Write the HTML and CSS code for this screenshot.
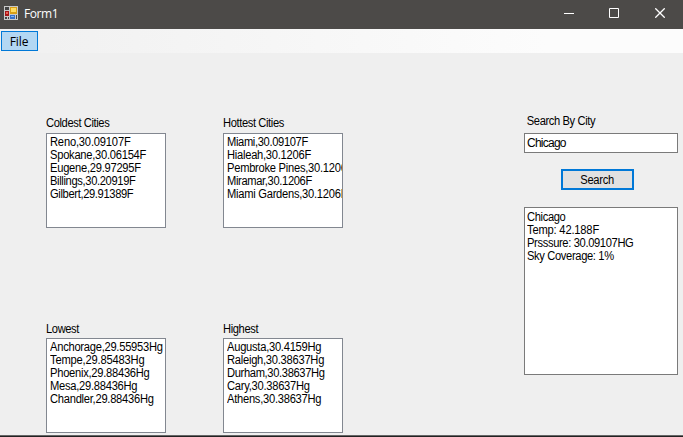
FILE: index.html
```html
<!DOCTYPE html>
<html lang="en">
<head>
<meta charset="utf-8">
<title>Form1</title>
<link rel="stylesheet" href="styles.css">
</head>
<body>
<div class="window">
  <header class="titlebar">
    <svg class="app-icon" width="14" height="14" viewBox="0 0 14 14" shape-rendering="crispEdges">
      <path fill="#c9c9c9" d="M0 0h14v14H0z"/>
      <path fill="#444" d="M1 1h4v3H1zM1 11h2v2H1zM4 11h1v2H4zM12 9h1v4h-1z"/>
      <path fill="#a51616" d="M1 5h4v5H1z"/><path fill="#ee6256" d="M2 6h2v2H2z"/>
      <path fill="#d99f16" d="M6 1h7v7H6z"/><path fill="#ffdc60" d="M7 2h5v4H7z"/>
      <path fill="#3970c8" d="M6 9h5v4H6z"/><path fill="#80b5f6" d="M7 10h3v1H7z"/>
    </svg>
    <h1 class="title">Form1</h1>
    <div class="controls">
      <svg width="10" height="10" viewBox="0 0 10 10"><path d="M0 5.5h10"/></svg>
      <svg width="10" height="10" viewBox="0 0 10 10"><path d="M.5.5h9v9h-9z"/></svg>
      <svg class="close" width="10" height="10" viewBox="0 0 10 10"><path d="M.3.3l9.4 9.4M9.7.3L.3 9.7"/></svg>
    </div>
  </header>
  <nav class="menubar"><button class="menu-item">File</button></nav>
  <main class="form">
    <div class="lists">
      <section>
        <h2 class="label">Coldest Cities</h2>
        <ul class="listbox"><li class="loose">Reno,30.09107F</li><li>Spokane,30.06154F</li><li>Eugene,29.97295F</li><li class="tight">Billings,30.20919F</li><li class="tight">Gilbert,29.91389F</li></ul>
      </section>
      <section>
        <h2 class="label">Hottest Cities</h2>
        <ul class="listbox"><li class="tight">Miami,30.09107F</li><li>Hialeah,30.1206F</li><li>Pembroke Pines,30.1206F</li><li class="tight">Miramar,30.1206F</li><li>Miami Gardens,30.1206F</li></ul>
      </section>
      <section>
        <h2 class="label label-short">Lowest</h2>
        <ul class="listbox"><li>Anchorage,29.55953Hg</li><li class="loose">Tempe,29.85483Hg</li><li>Phoenix,29.88436Hg</li><li>Mesa,29.88436Hg</li><li>Chandler,29.88436Hg</li></ul>
      </section>
      <section>
        <h2 class="label label-short">Highest</h2>
        <ul class="listbox"><li>Augusta,30.4159Hg</li><li>Raleigh,30.38637Hg</li><li class="tight">Durham,30.38637Hg</li><li>Cary,30.38637Hg</li><li>Athens,30.38637Hg</li></ul>
      </section>
    </div>
    <section class="search">
      <label class="label search-label" for="city">Search By City</label>
      <input class="field" id="city" value="Chicago">
      <button class="search-button"><span class="caption">Search</span></button>
      <div class="output"><p class="tight">Chicago</p><p class="loose">Temp: 42.188F</p><p class="tight">Prsssure: 30.09107HG</p><p class="tight">Sky Coverage: 1%</p></div>
    </section>
  </main>
</div>
</body>
</html>
```
FILE: styles.css
```css
* { box-sizing: border-box; margin: 0; padding: 0; }
body { width: 683px; height: 437px; overflow: hidden; font: 12px/13px "Liberation Sans", Arial, sans-serif; letter-spacing: -0.28px; color: #000; }
.tight { letter-spacing: -0.38px; }
.loose { letter-spacing: -0.2px; }
.window { display: flex; flex-direction: column; height: 437px; background: #efefef; border-bottom: 1px solid #222; }
.titlebar { display: flex; align-items: center; height: 29px; flex: none; padding: 0 18px 3px 4px; background: #4c4a48; color: #fff; }
.title { margin: 2px 0 0 6px; font: 12px/16px "Open Sans", "Noto Sans", sans-serif; letter-spacing: -0.4px; }
.controls { display: flex; gap: 35px; margin-left: auto; }
.controls svg { fill: none; stroke: #fff; stroke-width: 1; }
.controls .close { margin-left: 1px; stroke-width: 1.3; }
.menubar { height: 24px; flex: none; padding: 2px 1px; background: linear-gradient(90deg, #f0f0f0, #fcfcfc 80%); }
.menu-item { display: block; width: 37px; height: 20px; padding-right: 1px; border: 1px solid #0078d7; background: #b3d7f3; color: #000; font: 12px/17px "Open Sans", "Noto Sans", sans-serif; letter-spacing: -0.1px; }
.form { display: flex; flex: 1; justify-content: space-between; padding: 61px 5px 0 46px; border-bottom: 1px solid #666; }
.lists { display: grid; grid-template-columns: 120px 120px; grid-template-rows: 114px 114px; column-gap: 57px; row-gap: 91px; }
.label, .listbox li, .output p, .caption { transform: scaleX(0.93); transform-origin: left; }
.label { display: block; height: 19px; padding-top: 3px; font-size: 12px; font-weight: 400; line-height: 13px; letter-spacing: -0.42px; white-space: nowrap; }
.label-short { padding-top: 4px; }
.listbox { height: 95px; padding: 2px 0 0 3px; overflow: hidden; border: 1px solid #828790; background: #fff; list-style: none; white-space: nowrap; }
.search { display: flex; flex-direction: column; width: 154px; }
.search-label { padding: 1px 0 0 3px; }
.field { width: 154px; height: 20px; padding: 0 2px; border: 1px solid #7a7a7a; background: #fff; font: inherit; letter-spacing: -0.75px; color: #000; outline: 0; }
.search-button { width: 73px; height: 21px; margin: 16px 0 17px 37px; padding-top: 1px; border: 2px solid #0078d7; background: #e1e1e1; font: inherit; letter-spacing: -0.3px; color: #000; }
.caption { display: inline-block; transform-origin: center; }
.output { height: 168px; padding: 3px 2px; border: 1px solid #7a7a7a; background: #fff; }
```
